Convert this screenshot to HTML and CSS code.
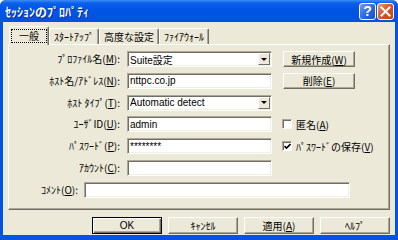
FILE: index.html
```html
<!DOCTYPE html>
<html lang="ja">
<head>
    <meta charset="UTF-8">
    <title>ｾｯｼｮﾝのﾌﾟﾛﾊﾟﾃｨ</title>
    <link rel="stylesheet" href="styles.css">
</head>
<body>
    <div class="window">
        <div class="titlebar">
            <span class="title">ｾｯｼｮﾝのﾌﾟﾛﾊﾟﾃｨ</span>
            <span class="tb-btn help">?</span>
            <span class="tb-btn close">
                <svg width="11" height="11" viewBox="0 0 11 11"><path d="M1.5 1.5 L9.5 9.5 M9.5 1.5 L1.5 9.5" stroke="#fff" stroke-width="2" stroke-linecap="square"/></svg>
            </span>
        </div>
        <div class="client">
            <div class="tabs">
                <div class="tab active"><span class="focus">一般</span></div>
                <div class="tab">ｽﾀｰﾄｱｯﾌﾟ</div>
                <div class="tab">高度な設定</div>
                <div class="tab">ﾌｧｲｱｳｫｰﾙ</div>
            </div>
            <div class="panel">
                <div class="form">
                    <label class="label">ﾌﾟﾛﾌｧｲﾙ名(<u>M</u>):</label>
                    <div class="field combo"><span class="val">Suite設定</span><span class="arrow"></span></div>
                    <div class="side"><span class="button small">新規作成(<u>W</u>)</span></div>

                    <label class="label">ﾎｽﾄ名/ｱﾄﾞﾚｽ(<u>N</u>):</label>
                    <div class="field"><span class="val">nttpc.co.jp</span></div>
                    <div class="side"><span class="button small">削除(<u>E</u>)</span></div>

                    <label class="label">ﾎｽﾄ ﾀｲﾌﾟ(<u>T</u>):</label>
                    <div class="field combo"><span class="val">Automatic detect</span><span class="arrow"></span></div>
                    <div class="side"></div>

                    <label class="label">ﾕｰｻﾞID(<u>U</u>):</label>
                    <div class="field"><span class="val">admin</span></div>
                    <div class="side"><span class="check"></span><span>匿名(<u>A</u>)</span></div>

                    <label class="label">ﾊﾟｽﾜｰﾄﾞ(<u>P</u>):</label>
                    <div class="field"><span class="val">********</span></div>
                    <div class="side"><span class="check">
                        <svg width="7" height="7" viewBox="0 0 7 7"><path d="M0.5 3 L2.5 5 L6.5 1" stroke="#000" stroke-width="1.6" fill="none"/></svg>
                    </span><span>ﾊﾟｽﾜｰﾄﾞの保存(<u>V</u>)</span></div>

                    <label class="label">ｱｶｳﾝﾄ(<u>C</u>):</label>
                    <div class="field"></div>
                    <div class="side"></div>

                    <div class="comment-row">
                        <label class="label comment-label">ｺﾒﾝﾄ(<u>O</u>):</label>
                        <div class="field comment"></div>
                    </div>
                </div>
            </div>
            <div class="buttons">
                <span class="button default">OK</span>
                <span class="button">ｷｬﾝｾﾙ</span>
                <span class="button">適用(<u>A</u>)</span>
                <span class="button">ﾍﾙﾌﾟ</span>
            </div>
        </div>
    </div>
</body>
</html>
```

FILE: styles.css
```css
body {
    margin: 0;
    font-family: "Noto Sans CJK JP", "Liberation Sans", sans-serif;
    font-size: 10px;
    color: #000;
    background: #fff;
}
.window {
    width: 398px;
    height: 240px;
    display: flex;
    flex-direction: column;
    background: #0054e3;
    border-radius: 6px 6px 0 0;
    overflow: hidden;
}
.titlebar {
    height: 22px;
    display: flex;
    align-items: center;
    gap: 1px;
    padding: 0 4px 0 5px;
    background: linear-gradient(to bottom, #3d8ef8 0, #0b61ea 3px, #0055e5 40%, #0052df 100%);
}
.title {
    flex: 1;
    color: #fff;
    font-weight: bold;
    font-size: 12px;
    text-shadow: 1px 1px #0a2a8a;
}
.tb-btn {
    width: 15px;
    height: 15px;
    border: 1px solid #fff;
    border-radius: 3px;
    display: flex;
    align-items: center;
    justify-content: center;
    color: #fff;
}
.help {
    background: linear-gradient(135deg, #6b9cf8, #2762e0 60%, #1e4fd0);
    font-family: "Liberation Sans", sans-serif;
    font-weight: bold;
    font-size: 14px;
}
.close {
    background: linear-gradient(135deg, #f09a7c, #e0522a 45%, #c8401a);
}
.client {
    flex: 1;
    margin: 0 3px 5px;
    padding: 4px 5px 0;
    background: #ece9d8;
    display: flex;
    flex-direction: column;
}
.tabs {
    display: flex;
    align-items: flex-end;
    height: 18px;
    padding-left: 1px;
}
.tab {
    height: 15px;
    padding: 0 4px;
    border-top: 1px solid #fff;
    border-left: 1px solid #fff;
    border-right: 1px solid #716f64;
    box-shadow: inset -1px 0 #aca899;
    border-radius: 2px 2px 0 0;
    line-height: 15px;
    white-space: nowrap;
}
.tab.active {
    height: 18px;
    margin-bottom: -1px;
    padding: 0 2px;
    position: relative;
    z-index: 1;
    background: #ece9d8;
    line-height: 17px;
}
.focus {
    display: inline-block;
    padding: 0 7px;
    line-height: 12px;
    outline: 1px dotted #000;
}
.panel {
    height: 166px;
    box-sizing: border-box;
    border-top: 1px solid #fff;
    border-left: 1px solid #fff;
    border-right: 1px solid #716f64;
    border-bottom: 1px solid #716f64;
    box-shadow: inset -1px -1px #aca899;
    padding-top: 6px;
}
.form {
    display: grid;
    grid-template-columns: 111px 145px 1fr;
    grid-auto-rows: 16px;
    column-gap: 7px;
    row-gap: 5.8px;
}
.label {
    text-align: right;
    line-height: 16px;
    white-space: nowrap;
}
.field {
    box-sizing: border-box;
    height: 16px;
    background: #fff;
    border-top: 1px solid #aca899;
    border-left: 1px solid #aca899;
    border-right: 1px solid #fff;
    border-bottom: 1px solid #fff;
    box-shadow: inset 1px 1px #716f64, inset -1px -1px #f1efe2;
    display: flex;
    align-items: center;
    padding: 0 2px;
}
.val {
    flex: 1;
    font-family: "Liberation Sans", "Noto Sans CJK JP", sans-serif;
    font-size: 10px;
    white-space: nowrap;
    overflow: hidden;
}
.combo {
    padding-right: 1px;
}
.arrow {
    width: 12px;
    height: 12px;
    box-sizing: border-box;
    background: #ece9d8;
    border-top: 1px solid #fff;
    border-left: 1px solid #fff;
    border-right: 1px solid #716f64;
    border-bottom: 1px solid #716f64;
    display: flex;
    align-items: center;
    justify-content: center;
}
.arrow::after {
    content: "";
    border-left: 3px solid transparent;
    border-right: 3px solid transparent;
    border-top: 3px solid #000;
}
.side {
    display: flex;
    align-items: center;
    gap: 4px;
    margin-left: 3px;
    white-space: nowrap;
}
.check {
    width: 10px;
    height: 10px;
    box-sizing: border-box;
    background: #fff;
    border-top: 1px solid #aca899;
    border-left: 1px solid #aca899;
    border-right: 1px solid #fff;
    border-bottom: 1px solid #fff;
    box-shadow: inset 1px 1px #716f64;
    display: flex;
    align-items: center;
    justify-content: center;
    padding: 1px 0 0 1px;
}
.comment-row {
    grid-column: 1 / -1;
    display: flex;
    gap: 6px;
}
.comment-label {
    width: 69px;
}
.comment {
    width: 266px;
}
.button {
    box-sizing: border-box;
    display: flex;
    align-items: center;
    justify-content: center;
    background: #ece9d8;
    border-top: 1px solid #fff;
    border-left: 1px solid #fff;
    border-right: 1px solid #716f64;
    border-bottom: 1px solid #716f64;
    box-shadow: inset -1px -1px #aca899;
    white-space: nowrap;
}
.button.small {
    width: 72px;
    height: 16px;
    margin-left: 1px;
}
.buttons {
    display: flex;
    justify-content: flex-end;
    gap: 6px;
    margin-top: 7px;
}
.buttons .button {
    width: 70px;
    height: 17px;
}
.button.default {
    border: 1px solid #000;
    box-shadow: inset 1px 1px #fff, inset -1px -1px #716f64, inset -2px -2px #aca899;
    font-family: "Liberation Sans", sans-serif;
}
```
